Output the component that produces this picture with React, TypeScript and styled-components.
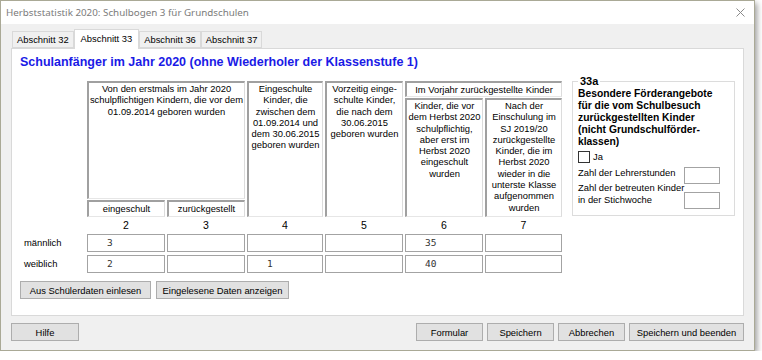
import React from 'react';
import styled, { createGlobalStyle } from 'styled-components';

const GlobalStyle = createGlobalStyle`
  html, body {
    margin: 0;
    padding: 0;
    background: #ffffff;
  }
  body {
    font-family: "Liberation Sans", Arial, sans-serif;
    font-size: 9.4px;
    color: #000;
  }
  * {
    box-sizing: border-box;
  }
`;

const Window = styled.div`
  width: 755px;
  border: 1px solid #aaa996;
  background: #f0f0f0;
  box-shadow: 2px 3px 6px rgba(0, 0, 0, 0.4);
`;

const TitleBar = styled.div`
  height: 23px;
  background: #fff;
  display: flex;
  align-items: center;
  justify-content: space-between;
  padding: 0 9px 0 5px;
`;

const Title = styled.span`
  font-family: "Noto Sans", "Open Sans", sans-serif;
  font-size: 9.8px;
  color: #7b7b7b;
`;

const Body = styled.div`
  padding: 5px 10px 9px 10px;
`;

const TabStrip = styled.div`
  display: flex;
  align-items: flex-end;
  height: 19px;
  padding-left: 1px;
`;

const Tab = styled.div<{ $active?: boolean }>`
  position: relative;
  z-index: ${p => (p.$active ? 1 : 0)};
  height: ${p => (p.$active ? '20px' : '17px')};
  margin-bottom: ${p => (p.$active ? '-1px' : '0')};
  padding: ${p => (p.$active ? '0 6px 2px' : '0 4px')};
  display: flex;
  align-items: center;
  background: ${p => (p.$active ? '#ffffff' : '#f0f0f0')};
  border: 1px solid #d9d9d9;
  border-bottom: ${p => (p.$active ? 'none' : '1px solid #d9d9d9')};
  white-space: nowrap;
`;

const Page = styled.div`
  height: 268px;
  background: #fff;
  border: 1px solid #d9d9d9;
  padding: 6px 8px 0 8px;
`;

const Heading = styled.h1`
  margin: 0;
  font-size: 12.5px;
  line-height: 15px;
  font-weight: bold;
  color: #1a1ae6;
`;

const MainRow = styled.div`
  display: flex;
  align-items: flex-start;
  margin-top: 11px;
`;

const Table = styled.div`
  margin-left: 4px;
  display: grid;
  grid-template-columns: 61px 78px 78px 76px 78px 78px 77px;
  grid-template-rows: 16px 101px 17px 15px 20px 18px;
  column-gap: 2px;
  row-gap: 1px;
`;

const HeadBox = styled.div<{ $col: string; $row: string; $middle?: boolean }>`
  grid-column: ${p => p.$col};
  grid-row: ${p => p.$row};
  border-top: 2px solid #a0a0a0;
  border-left: 2px solid #a0a0a0;
  border-right: 1px solid #dcdcdc;
  border-bottom: 1px solid #e6e6e6;
  text-align: center;
  white-space: nowrap;
  line-height: 11.3px;
  padding-top: 0;
  display: ${p => (p.$middle ? 'flex' : 'block')};
  align-items: center;
  justify-content: center;
`;

const ColNumber = styled.div<{ $col: number }>`
  grid-column: ${p => p.$col};
  grid-row: 4;
  text-align: center;
  font-size: 10.5px;
  line-height: 15px;
`;

const RowLabel = styled.div<{ $row: number }>`
  grid-column: 1;
  grid-row: ${p => p.$row};
  align-self: start;
  line-height: 18px;
`;

const Cell = styled.div<{ $col: number; $row: number }>`
  grid-column: ${p => p.$col};
  grid-row: ${p => p.$row};
  height: 18px;
  border: 1px solid #a3a3a3;
  background: #fff;
  padding-left: 19px;
  font-family: "DejaVu Sans Mono", "Liberation Mono", monospace;
  font-size: 9.5px;
  line-height: 16px;
  color: #333;
`;

const GroupBox = styled.fieldset`
  margin: -6px 0 0 10px;
  width: 167px;
  border: 1px solid #dcdcdc;
  padding: 0 14px 6px 5px;
`;

const Legend = styled.legend`
  font-size: 11px;
  font-weight: bold;
  line-height: 13px;
  padding: 0 2px;
`;

const GroupTitle = styled.div`
  font-size: 10.3px;
  font-weight: bold;
  line-height: 12px;
  white-space: nowrap;
`;

const CheckRow = styled.label`
  display: flex;
  align-items: center;
  gap: 3px;
  margin-top: 2px;
  height: 13px;
`;

const CheckBox = styled.span`
  width: 12px;
  height: 12px;
  border: 1px solid #333;
  background: #fff;
`;

const FieldRow = styled.div<{ $shift: number }>`
  display: flex;
  justify-content: space-between;
  align-items: flex-start;
  margin-top: ${p => p.$shift}px;
`;

const FieldLabel = styled.div`
  line-height: 12px;
  white-space: nowrap;
`;

const SmallInput = styled.div<{ $top: number }>`
  width: 36px;
  height: 17px;
  margin-top: ${p => p.$top}px;
  border: 1px solid #a3a3a3;
  background: #fff;
`;

const ButtonRow = styled.div`
  display: flex;
  gap: 5px;
  margin-top: 8px;
`;

const Button = styled.button<{ $w: number }>`
  width: ${p => p.$w}px;
  height: 18px;
  padding: 0;
  border: 1px solid #adadad;
  background: #e1e1e1;
  font-family: "Liberation Sans", Arial, sans-serif;
  font-size: 9.4px;
  color: #000;
  white-space: nowrap;
`;

const Footer = styled.div`
  display: flex;
  justify-content: space-between;
  margin-top: 7px;
`;

const FooterRight = styled.div`
  display: flex;
  gap: 4px;
`;

const CloseIcon = () => (
  <svg width="9" height="9" viewBox="0 0 9 9">
    <path d="M0.5 0.5 L8.5 8.5 M8.5 0.5 L0.5 8.5" stroke="#8a8a8a" strokeWidth="1" fill="none" />
  </svg>
);

const rows = [
  { label: 'männlich', values: ['3', '', '', '', '35', ''] },
  { label: 'weiblich', values: ['2', '', '1', '', '40', ''] },
];

export default function App() {
  return (
    <>
      <GlobalStyle />
      <Window>
        <TitleBar>
          <Title>Herbststatistik 2020: Schulbogen 3 für Grundschulen</Title>
          <CloseIcon />
        </TitleBar>
        <Body>
          <TabStrip>
            <Tab>Abschnitt 32</Tab>
            <Tab $active>Abschnitt 33</Tab>
            <Tab>Abschnitt 36</Tab>
            <Tab>Abschnitt 37</Tab>
          </TabStrip>
          <Page>
            <Heading>Schulanfänger im Jahr 2020 (ohne Wiederholer der Klassenstufe 1)</Heading>
            <MainRow>
              <Table>
                <HeadBox $col="2 / 4" $row="1 / 3">
                  Von den erstmals im Jahr 2020
                  <br />
                  schulpflichtigen Kindern, die vor dem
                  <br />
                  01.09.2014 geboren wurden
                </HeadBox>
                <HeadBox $col="2" $row="3" $middle>eingeschult</HeadBox>
                <HeadBox $col="3" $row="3" $middle>zurückgestellt</HeadBox>
                <HeadBox $col="4" $row="1 / 4">
                  Eingeschulte
                  <br />
                  Kinder, die
                  <br />
                  zwischen dem
                  <br />
                  01.09.2014 und
                  <br />
                  dem 30.06.2015
                  <br />
                  geboren wurden
                </HeadBox>
                <HeadBox $col="5" $row="1 / 4">
                  Vorzeitig einge-
                  <br />
                  schulte Kinder,
                  <br />
                  die nach dem
                  <br />
                  30.06.2015
                  <br />
                  geboren wurden
                </HeadBox>
                <HeadBox $col="6 / 8" $row="1" $middle>Im Vorjahr zurückgestellte Kinder</HeadBox>
                <HeadBox $col="6" $row="2 / 4">
                  Kinder, die vor
                  <br />
                  dem Herbst 2020
                  <br />
                  schulpflichtig,
                  <br />
                  aber erst im
                  <br />
                  Herbst 2020
                  <br />
                  eingeschult
                  <br />
                  wurden
                </HeadBox>
                <HeadBox $col="7" $row="2 / 4">
                  Nach der
                  <br />
                  Einschulung im
                  <br />
                  SJ 2019/20
                  <br />
                  zurückgestellte
                  <br />
                  Kinder, die im
                  <br />
                  Herbst 2020
                  <br />
                  wieder in die
                  <br />
                  unterste Klasse
                  <br />
                  aufgenommen
                  <br />
                  wurden
                </HeadBox>
                {[2, 3, 4, 5, 6, 7].map(n => (
                  <ColNumber key={n} $col={n}>
                    {n}
                  </ColNumber>
                ))}
                {rows.map((r, ri) => (
                  <React.Fragment key={r.label}>
                    <RowLabel $row={5 + ri}>{r.label}</RowLabel>
                    {r.values.map((v, ci) => (
                      <Cell key={ci} $col={2 + ci} $row={5 + ri}>
                        {v}
                      </Cell>
                    ))}
                  </React.Fragment>
                ))}
              </Table>
              <GroupBox>
                <Legend>33a</Legend>
                <GroupTitle>
                  Besondere Förderangebote
                  <br />
                  für die vom Schulbesuch
                  <br />
                  zurückgestellten Kinder
                  <br />
                  (nicht Grundschulförder-
                  <br />
                  klassen)
                </GroupTitle>
                <CheckRow>
                  <CheckBox />
                  Ja
                </CheckRow>
                <FieldRow $shift={4}>
                  <FieldLabel>Zahl der Lehrerstunden</FieldLabel>
                  <SmallInput $top={0} />
                </FieldRow>
                <FieldRow $shift={-2}>
                  <FieldLabel>
                    Zahl der betreuten Kinder
                    <br />
                    in der Stichwoche
                  </FieldLabel>
                  <SmallInput $top={10} />
                </FieldRow>
              </GroupBox>
            </MainRow>
            <ButtonRow>
              <Button $w={131}>Aus Schülerdaten einlesen</Button>
              <Button $w={133}>Eingelesene Daten anzeigen</Button>
            </ButtonRow>
          </Page>
          <Footer>
            <Button $w={68}>Hilfe</Button>
            <FooterRight>
              <Button $w={67}>Formular</Button>
              <Button $w={67}>Speichern</Button>
              <Button $w={67}>Abbrechen</Button>
              <Button $w={115}>Speichern und beenden</Button>
            </FooterRight>
          </Footer>
        </Body>
      </Window>
    </>
  );
}
